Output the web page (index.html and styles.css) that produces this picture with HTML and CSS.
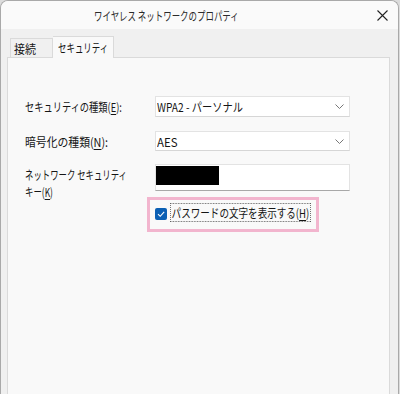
FILE: index.html
```html
<!DOCTYPE html>
<html lang="ja">
<head>
<meta charset="utf-8">
<title>ワイヤレス ネットワークのプロパティ</title>
<link rel="stylesheet" href="styles.css">
</head>
<body>
<div class="window">
  <div class="titlebar">
    <span class="title"><span class="sq" data-w="145">ワイヤレス ネットワークのプロパティ</span></span>
    <svg class="close" width="11" height="11" viewBox="0 0 11 11"><path d="M0.5 0.5 L10.5 10.5 M10.5 0.5 L0.5 10.5" stroke="#222" stroke-width="1.1" fill="none"/></svg>
  </div>
  <div class="client">
    <div class="tabs">
      <div class="tab"><span class="sq" data-w="22">接続</span></div>
      <div class="tab active"><span class="sq" data-w="50">セキュリティ</span></div>
    </div>
    <div class="panel">
      <div class="row r1">
        <label class="lbl"><span class="sq" data-w="97">セキュリティの種類(<u>E</u>):</span></label>
        <div class="combo">
          <span class="sq" data-w="86">WPA2 - パーソナル</span>
          <svg class="chev" width="9" height="5" viewBox="0 0 9 5"><path d="M0.5 0.5 L4.5 4.5 L8.5 0.5" stroke="#777" stroke-width="1" fill="none"/></svg>
        </div>
      </div>
      <div class="row r2">
        <label class="lbl"><span class="sq" data-w="83">暗号化の種類(<u>N</u>):</span></label>
        <div class="combo">
          <span class="sq" data-w="21">AES</span>
          <svg class="chev" width="9" height="5" viewBox="0 0 9 5"><path d="M0.5 0.5 L4.5 4.5 L8.5 0.5" stroke="#777" stroke-width="1" fill="none"/></svg>
        </div>
      </div>
      <div class="row r3">
        <label class="lbl lbl-key"><span class="sq" data-w="102">ネットワーク セキュリティ</span><br><span class="sq" data-w="28">キー(<u>K</u>)</span></label>
        <div class="input"><div class="mask"></div></div>
      </div>
      <div class="row r4">
        <div class="lblspace"></div>
        <div class="highlight">
          <span class="check"><svg width="12" height="12" viewBox="0 0 12 12"><path d="M3 6.2 L5.2 8.3 L9.2 3.9" stroke="#fff" stroke-width="1.1" fill="none"/></svg></span>
          <span class="focus sq" data-w="141">パスワードの文字を表示する(<u>H</u>)</span>
        </div>
      </div>
    </div>
  </div>
</div>
<script src="fit.js"></script>
</body>
</html>
```

FILE: styles.css
```css
html, body {
  margin: 0;
  padding: 0;
  background: #dcdcdc;
  height: 394px;
  overflow: hidden;
}
body {
  font-family: "Noto Sans CJK JP", "Noto Sans", sans-serif;
  font-size: 12px;
  color: #151515;
}
.sq {
  display: inline-block;
  transform-origin: 0 50%;
  white-space: nowrap;
  transform: scaleX(var(--sx, 1));
}
.window {
  width: 397px;
  height: 400px;
  border: 1px solid #a9a9a9;
  border-bottom: none;
  border-radius: 8px 8px 0 0;
  background: #f0f0f0;
  overflow: hidden;
}
.titlebar {
  height: 28px;
  background: #fafafa;
  display: flex;
  align-items: center;
  padding-left: 93px;
  padding-right: 10px;
}
.title {
  flex: 1;
  color: #2a2a2a;
}
.close {
  display: block;
}
.client {
  padding: 7px 7px 0 6px;
}
.tabs {
  display: flex;
  align-items: flex-end;
  padding-left: 3px;
  height: 21px;
  position: relative;
  z-index: 1;
}
.tab {
  height: 19px;
  box-sizing: border-box;
  padding: 0 3px 0 3px;
  width: 43px;
  border: 1px solid #dadada;
  border-bottom: none;
  background: #f0f0f0;
  line-height: 19px;
  white-space: nowrap;
}
.tab.active {
  height: 22px;
  width: 61px;
  margin-bottom: -1px;
  padding-left: 5px;
  background: #f9f9f9;
  border-left: none;
  line-height: 21px;
}
.panel {
  height: 340px;
  border: 1px solid #dadada;
  background: #f9f9f9;
  padding: 38px 0 0 17px;
  box-sizing: border-box;
  width: 383px;
}
.row {
  display: flex;
  align-items: center;
}
.lbl {
  width: 130px;
  flex: none;
  line-height: 17px;
  white-space: nowrap;
}
.lblspace {
  width: 122px;
  flex: none;
}
.combo {
  width: 195px;
  box-sizing: border-box;
  background: #fff;
  border: 1px solid #e3e3e3;
  border-bottom-color: #d6d6d6;
  display: flex;
  align-items: center;
  justify-content: space-between;
  padding: 0 5px 0 1px;
}
.r1 .combo { height: 21px; }
.r2 { margin-top: 14px; }
.r2 .combo { height: 20px; }
.r3 {
  margin-top: 13px;
  height: 27px;
  align-items: flex-start;
}
.lbl-key {
  padding-top: 2px;
}
.input {
  width: 195px;
  height: 27px;
  box-sizing: border-box;
  background: #fff;
  border: 1px solid #e3e3e3;
  border-bottom-color: #a8a8a8;
  padding: 1px 0 0 0;
}
.mask {
  width: 63px;
  height: 19px;
  background: #000;
}
.r4 {
  margin-top: 6px;
}
.highlight {
  width: 172px;
  height: 35px;
  box-sizing: border-box;
  border: 3px solid #f2b5ce;
  display: flex;
  align-items: flex-start;
  padding: 3px 0 0 5px;
}
.check {
  width: 12px;
  height: 12px;
  margin-top: 5px;
  background: #0a5fb4;
  border-radius: 2px;
  flex: none;
  display: block;
}
.check svg { display: block; }
.focus {
  flex: none;
  margin-left: 3px;
  height: 19px;
  box-sizing: border-box;
  border: 1px dotted #555;
  line-height: 17px;
  padding: 0 1px 0 1px;
}
u {
  text-decoration: underline;
  text-underline-offset: 2px;
}
```

FILE: fit.js
```js
(function () {
  function fit() {
    document.querySelectorAll('.sq[data-w]').forEach(function (el) {
      var target = parseFloat(el.getAttribute('data-w'));
      var w = el.offsetWidth;
      if (w > 0) {
        el.style.setProperty('--sx', Math.min(1, target / w).toFixed(4));
      }
    });
  }
  fit();
  if (document.fonts && document.fonts.ready) {
    document.fonts.ready.then(fit);
  }
})();
```
